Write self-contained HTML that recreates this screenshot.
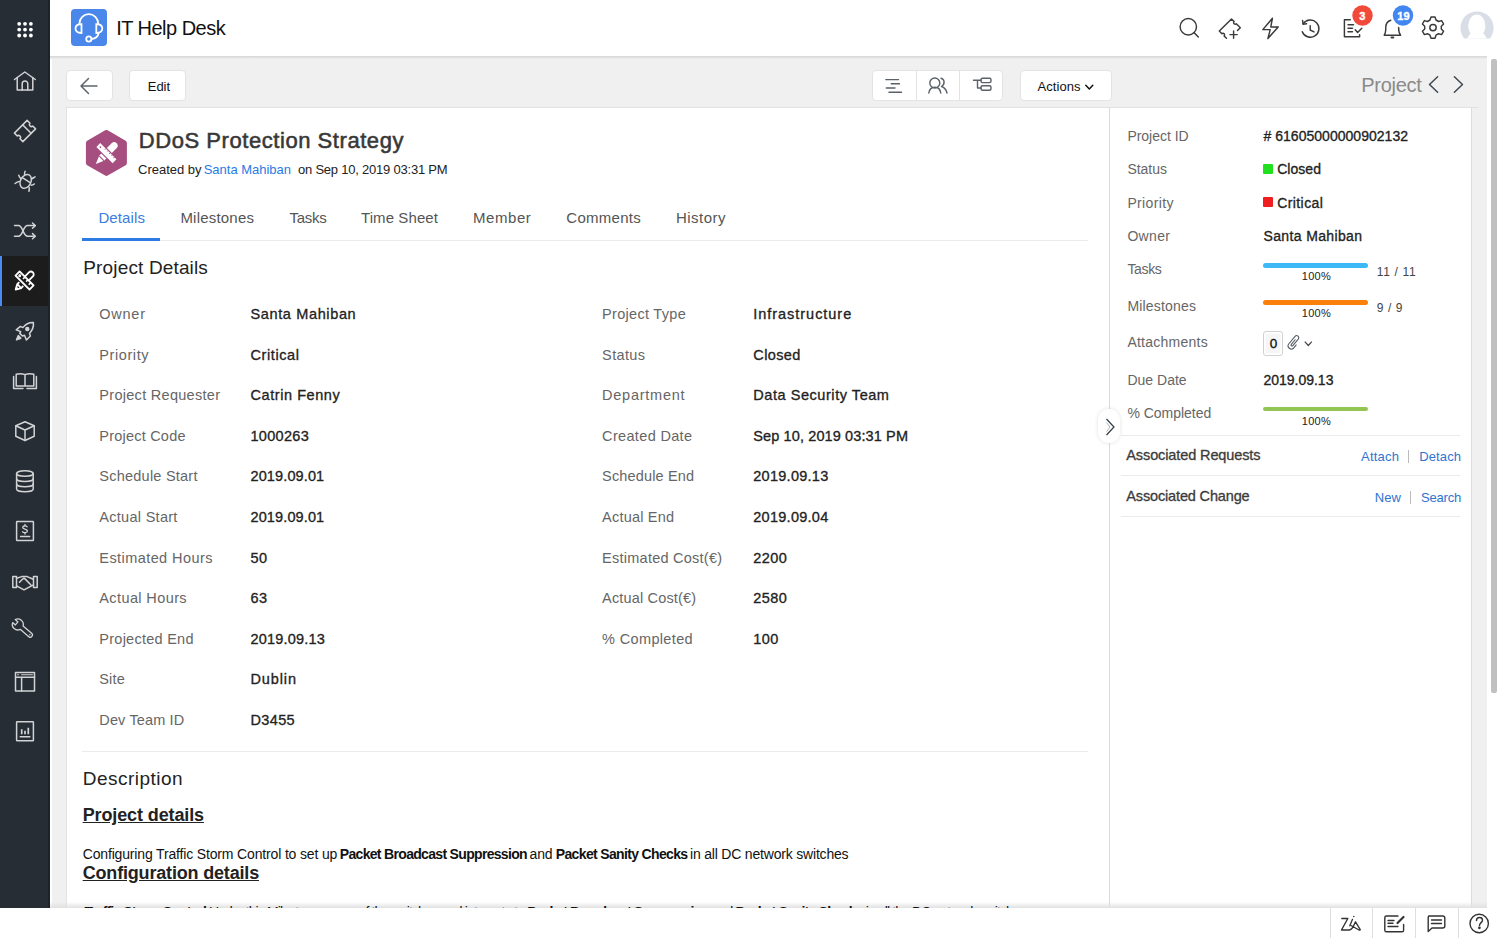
<!DOCTYPE html>
<html><head><meta charset="utf-8"><title>IT Help Desk</title>
<style>
*{margin:0;padding:0;box-sizing:border-box}
html,body{width:1500px;height:938px;overflow:hidden;background:#f0f0f0;font-family:"Liberation Sans",sans-serif;position:relative}
.a{position:absolute}
.t{position:absolute;z-index:4;white-space:nowrap;line-height:1;font-family:"Liberation Sans",sans-serif}
.t b{font-weight:700}
#side{left:0;top:0;width:50px;height:908px;background:#262d35}
#sideedge{left:48px;top:0;width:2px;height:908px;background:#1c232a}
#active{left:0;top:256px;width:48px;height:50px;background:#1c1c1c}
#activebar{left:0;top:256px;width:2px;height:50px;background:#4a8af4}
#header{left:50px;top:0;width:1450px;height:56px;background:#fff}
#hshadow{left:50px;top:56px;width:1437px;height:3px;background:linear-gradient(#d6d6d6,#efefef)}
#whitegap{left:50px;top:56px;width:2px;height:852px;background:#fff}
#track{left:1487px;top:56px;width:13px;height:852px;background:#fff}
#thumb{left:1491px;top:59px;width:6px;height:634px;background:#c1c0c1;border-radius:2px}
.btn{background:#fff;border:1px solid #e3e3e3;border-radius:4px}
#card{left:66px;top:107px;width:1406px;height:820px;background:#fff;border:1px solid #e2e2e2;border-right-color:#dcdcdc}
#divider{left:1109px;top:107px;width:1px;height:810px;background:#dadada}
.hl{height:1px;background:#ebebeb}
#footer{left:0;top:908px;width:1500px;height:30px;background:#fff;z-index:5}
#fshadow{left:50px;top:902px;width:1437px;height:6px;background:linear-gradient(rgba(240,240,240,0),rgba(225,225,225,1))}
.fdiv{top:908px;width:1px;height:30px;background:#dedede;z-index:6}
svg{position:absolute;overflow:visible}

</style></head><body>
<div class="a" id="header"></div>
<div class="a" id="whitegap"></div>
<div class="a" id="track"></div>
<div class="a" id="thumb"></div>
<div class="a" id="hshadow"></div>

<!-- toolbar -->
<div class="a btn" style="left:66px;top:70px;width:47px;height:31px"></div>
<div class="a btn" style="left:129px;top:70px;width:57px;height:31px"></div>
<div class="a btn" style="left:872px;top:70px;width:131px;height:31px"></div>
<div class="a" style="left:916px;top:70px;width:1px;height:31px;background:#e3e3e3"></div>
<div class="a" style="left:959px;top:70px;width:1px;height:31px;background:#e3e3e3"></div>
<div class="a btn" style="left:1020px;top:70px;width:92px;height:31px"></div>

<!-- card -->
<div class="a" id="card"></div>
<div class="a" id="divider"></div>
<div class="a" style="left:1471px;top:107px;width:7px;height:1px;background:#e2e2e2"></div>
<div class="a hl" style="left:82px;top:240px;width:1006px;"></div>
<div class="a" style="left:82px;top:238px;width:78px;height:3px;background:#2f7be5"></div>
<div class="a hl" style="left:82px;top:751px;width:1006px;"></div>
<div class="a hl" style="left:1121px;top:435px;width:339px;"></div>
<div class="a hl" style="left:1121px;top:475px;width:339px;"></div>
<div class="a hl" style="left:1121px;top:516px;width:339px;"></div>

<!-- progress bars -->
<div class="a" style="left:1263px;top:263px;width:105px;height:5px;border-radius:3px;background:#3cb9f6"></div>
<div class="a" style="left:1263px;top:300px;width:105px;height:5px;border-radius:3px;background:#fb7f0b"></div>
<div class="a" style="left:1263px;top:407px;width:105px;height:4px;border-radius:3px;background:#92c552"></div>
<div class="a" style="left:1263px;top:163.5px;width:10px;height:10px;border-radius:1px;background:#20e020"></div>
<div class="a" style="left:1263px;top:197px;width:10px;height:10px;border-radius:1px;background:#f01e1e"></div>
<div class="a" style="left:1263px;top:331px;width:20px;height:25px;border-radius:3px;background:#f6f6f6;border:1.5px solid #d2d2d2;box-shadow:inset 0 0 0 1.5px #fff"></div>
<div class="a" style="left:1408px;top:450px;width:1px;height:13px;background:#bbb"></div>
<div class="a" style="left:1410px;top:491px;width:1px;height:13px;background:#bbb"></div>

<!-- collapse handle -->
<div class="a" style="left:1098px;top:409px;width:22px;height:34px;border-radius:11px;background:#fff;box-shadow:0 0 4px rgba(0,0,0,0.12)"></div>

<!-- footer -->
<div class="a" id="fshadow"></div>
<div class="a" id="footer"></div>
<div class="a" style="left:0;top:908px;width:1500px;height:1px;background:#e6e6e6"></div>
<div class="a fdiv" style="left:1330px"></div>
<div class="a fdiv" style="left:1372px"></div>
<div class="a fdiv" style="left:1415px"></div>
<div class="a fdiv" style="left:1458px"></div>

<!-- sidebar -->
<div class="a" id="side"></div>
<div class="a" id="sideedge"></div>
<div class="a" id="active"></div>
<div class="a" id="activebar"></div>

<!-- logo -->
<div class="a" style="left:71px;top:9px;width:36px;height:37px;border-radius:4px;background:#4a87ea"></div>
<!-- hexagon -->
<svg style="left:0;top:0" width="1500" height="938" viewBox="0 0 1500 938">
  <path d="M106.4 132.5 L124.4 142.9 L124.4 163 L106.4 173.4 L88.4 163 L88.4 142.9 Z" fill="#a64e7f" stroke="#a64e7f" stroke-width="5" stroke-linejoin="round"/>
</svg>
<svg style="left:0;top:0;z-index:3" width="1500" height="938" viewBox="0 0 1500 938">
<!-- sidebar grid -->
<g fill="#fff">
<circle cx="19.2" cy="23.8" r="1.9"/><circle cx="25" cy="23.8" r="1.9"/><circle cx="30.9" cy="23.8" r="1.9"/>
<circle cx="19.2" cy="29.6" r="1.9"/><circle cx="25" cy="29.6" r="1.9"/><circle cx="30.9" cy="29.6" r="1.9"/>
<circle cx="19.2" cy="35.5" r="1.9"/><circle cx="25" cy="35.5" r="1.9"/><circle cx="30.9" cy="35.5" r="1.9"/>
</g>
<g fill="none" stroke="#d2d3d5" stroke-width="1.5" stroke-linejoin="round" stroke-linecap="round">
<!-- home -->
<path d="M14.5 79.5 L24.8 72 L35.3 79.5"/>
<path d="M17.2 77.5 V90 H32.8 V77.5"/>
<path d="M22.2 90 V83.8 A2.8 2.8 0 0 1 27.8 83.8 V90"/>
<!-- ticket -->
<g transform="translate(25 131) rotate(-45)">
<path d="M-9 -6 H9 V-1.9 A1.9 1.9 0 0 0 9 1.9 V6 H-9 V1.9 A1.9 1.9 0 0 0 -9 -1.9 Z"/>
<path d="M2.7 -6 V6"/>
</g>
<!-- bug -->
<ellipse cx="25.7" cy="181.4" rx="5.2" ry="7.3" transform="rotate(28 25.7 181.4)"/>
<path d="M22.3 177.6 L30.2 182.6"/>
<path d="M25.1 171.2 C24.6 172.3 24.4 173.4 24.6 174.6 M18.7 175.3 C19.2 176.6 19.8 177.6 20.9 178.6 M15.1 183.5 C16.5 182.3 17.6 181.6 19.2 181.4 M35 176.9 C33.8 177.6 32.6 178.2 31.5 179.2 M34.3 184 C33.3 184.8 32.3 185.1 31.1 185.2 M28.9 191.2 C29.3 190 29.4 188.8 29.2 187.5"/>
<!-- shuffle -->
<path d="M14.5 225.6 H18.5 C23 225.6 23 236.2 27.5 236.2 H35"/>
<path d="M14.5 236.2 H18.5 C23 236.2 23 225.6 27.5 225.6 H35"/>
<path d="M32.5 223 L35.3 225.6 L32.5 228.2 M32.5 233.6 L35.3 236.2 L32.5 238.8"/>
<!-- rocket -->
<path d="M33.4 322.5 C29.5 322.3 25.5 324.3 22.8 327.6 L20.4 326.4 L16.2 329.8 L20.7 331.6 L19.8 333.4 L22.4 336 L24.5 335.2 L26.4 340 L30.4 336 L29.5 333.4 C32.4 330.3 33.8 326.4 33.4 322.5 Z"/>
<circle cx="27.3" cy="329" r="1.5" fill="#d2d3d5"/>
<path d="M16.5 339.8 L18.3 335.6 L20.8 338.2 Z" fill="#d2d3d5"/>
<!-- book -->
<path d="M16.2 374.2 C19 373.6 22 373.6 25 374.6 C28 373.6 31 373.6 33.8 374.2 V386 H16.2 Z M25 374.6 V386"/>
<path d="M13.6 376.6 V388.4 H23 M36.4 376.6 V388.4 H27"/>
<!-- cube -->
<path d="M25 421.8 L34.2 425.8 V436.2 L25 440.5 L15.8 436.2 V425.8 Z"/>
<path d="M15.8 425.8 L25 430 L34.2 425.8 M25 430 V440.5"/>
<!-- database -->
<ellipse cx="24.9" cy="473.5" rx="8.3" ry="2.8"/>
<path d="M16.6 473.5 V489 A8.3 2.8 0 0 0 33.2 489 V473.5"/>
<path d="M16.6 478.8 A8.3 2.8 0 0 0 33.2 478.8 M16.6 484 A8.3 2.8 0 0 0 33.2 484"/>
<!-- dollar doc -->
<rect x="16.6" y="521.5" width="16.8" height="19" rx="0.5"/>
<path d="M20.6 536.6 H29.6"/>
<path d="M27.2 526.8 C26.5 525.7 22.7 525.5 22.7 527.5 C22.7 529.4 27.4 528.8 27.4 531 C27.4 533 23.3 532.9 22.6 531.8 M25 524.3 V525.8 M25 532.7 V534" stroke-width="1.3"/>
<!-- handshake -->
<path d="M12.8 576.5 H16.5 V587.6 H12.8 Z M33.5 576.5 H37.2 V587.6 H33.5 Z"/>
<path d="M16.5 578.2 L21.8 576.6 H27.2 L33.3 579.2 M16.5 585.8 L24 589.8 L33.5 584.8 M19.5 582.3 L23 578.8 C23.6 578.3 24.4 578.3 25 578.9 L30.8 584.8"/>
<!-- wrench -->
<g transform="translate(17.8 624.4) rotate(40.4)">
<path d="M5.04 -2.2 L16.3 -2.2 A2.2 2.2 0 0 1 16.3 2.2 L5.04 2.2 A5.5 5.5 0 0 1 -5.12 2 L-1.5 2 L-1.5 -2 L-5.12 -2 A5.5 5.5 0 0 1 5.04 -2.2 Z" stroke-width="1.3"/>
<circle cx="15.8" cy="0" r="0.7" fill="#d2d3d5" stroke="none"/>
</g>
<!-- layout -->
<rect x="15.5" y="672.5" width="19" height="18.5"/>
<path d="M15.5 677.2 H34.5 M21.6 677.2 V691"/>
<path d="M17.6 674.8 H18.6 M21.5 674.8 H32.5" stroke-width="1.1"/>
<!-- chart doc -->
<rect x="16.6" y="721.7" width="16.8" height="19" rx="0.5"/>
<path d="M20.2 736.7 H29.8"/>
<path d="M21.7 734.3 V729.2 M25 734.3 V730.8 M28.3 734.3 V727.8" stroke-width="1.7" stroke-linecap="butt"/>
</g>
<!-- active ruler/pencil white -->
<g fill="none" stroke="#fff" stroke-width="1.8" stroke-linejoin="round">
<g transform="translate(24.05 281.25) rotate(45)">
<path d="M-2.8 -3.9 V-9.7 A2.8 2.8 0 0 1 2.8 -9.7 V-3.9 M-2.8 3.9 V6.8 L0 11.8 L2.8 6.8 V3.9 M-2.8 6.8 H2.8"/><path d="M-1.2 9.6 L0 11.8 L1.2 9.6 Z" fill="#fff" stroke-width="1"/>
</g>
<g transform="translate(24.55 280.5) rotate(45)">
<rect x="-9.9" y="-2.9" width="19.8" height="5.8"/>
<path d="M-2.2 -2.9 V0 M1.9 -2.9 V-0.3 M5.9 -2.9 V0" stroke-width="1.5"/>
<circle cx="-6.8" cy="0" r="0.6" fill="#fff"/>
</g>
</g>
<!-- logo headset -->
<g fill="none" stroke="#fff" stroke-width="1.8" stroke-linecap="round">
<path d="M79.5 23.5 A9.3 9.3 0 0 1 98.1 23.5"/>
<path d="M81.5 24.2 V33 C77 33 75.5 30.5 75.5 28.6 C75.5 26.6 77 24.2 81.5 24.2 Z"/>
<path d="M96.3 24.2 V33 C100.8 33 102.3 30.5 102.3 28.6 C102.3 26.6 100.8 24.2 96.3 24.2 Z"/>
<path d="M98.5 33.5 C98 36.5 95.5 38.5 91.5 39"/>
<circle cx="88.8" cy="39" r="2.6"/>
</g>

<!-- hexagon icon (ruler/pencil white) -->
<g transform="translate(106.2 153.7) rotate(45)">
<path d="M-3.5 -11.2 A3.5 3.5 0 0 1 3.5 -11.2 V6.5 L0 14.7 L-3.5 6.5 Z" fill="#fff"/>
<path d="M-3.5 6.5 H3.5" stroke="#a64e7f" stroke-width="1.1"/>
</g>
<g transform="translate(106.4 153.1) rotate(45)">
<rect x="-12.1" y="-3.3" width="24.2" height="6.6" fill="#fff" stroke="#a64e7f" stroke-width="1.2"/>
<path d="M-3.5 -3.3 V-1.3 M-0.5 -3.3 V-1.8 M2.5 -3.3 V-1.3 M5.5 -3.3 V-1.8 M8.5 -3.3 V-1.3" stroke="#a64e7f" stroke-width="0.9"/>
<circle cx="-8.5" cy="0" r="0.8" fill="#a64e7f"/>
</g>
<!-- header icons -->
<g fill="none" stroke="#3a3a3a" stroke-width="1.45" stroke-linejoin="round" stroke-linecap="round">
<circle cx="1188.3" cy="26.8" r="8.2"/>
<path d="M1194.2 32.7 L1198.3 37"/>
<!-- ticket plus -->
<path d="M1237.5 30.5 L1240.3 27.7 L1236.3 23.7 C1234.8 25.2 1232.6 23 1234.1 21.5 L1231.5 18.9 L1219.3 31.1 L1221.9 33.7 C1223.4 32.2 1225.6 34.4 1224.1 35.9 L1226.5 38.3"/>
<path d="M1233.6 31 V38.2 M1230 34.6 H1237.2"/>
<!-- lightning -->
<path d="M1272.4 18.3 L1262.8 29.6 H1270.2 L1267.9 38.6 L1278.2 26.9 H1270.8 Z"/>
<!-- history -->
<g transform="translate(0.8 0.7)">
<path d="M1302.5 23 A8.6 8.6 0 1 1 1301.5 31"/>
<path d="M1301.8 19.8 L1302.2 23.5 L1305.8 23"/>
<path d="M1309.4 25 V29.3 L1313.2 31.2"/>
</g>
<!-- tasks doc -->
<path d="M1350.3 19.8 H1344.4 V36.8 H1359.6 V34.6"/>
<path d="M1348 24.8 H1353.5 M1348 28.2 H1352.5 M1348 31.7 H1352.5"/>
<path d="M1355.2 29.8 L1357.6 32.4 L1361.8 28.2"/>
<!-- bell -->
<path d="M1390.8 20.2 C1387.2 21.2 1385.8 24 1385.8 27.5 C1385.8 31 1385.5 33.5 1384.2 35.2 H1400.6 C1399.2 33.5 1398.6 31 1398.6 27.5"/>
<path d="M1391.5 37.6 H1393.3" stroke-width="2"/>
<!-- gear -->
<path d="M1431 17 H1435 L1436 20 L1438.6 21.5 L1441.6 20.6 L1443.6 24 L1441.3 26.3 V29 L1443.6 31.2 L1441.6 34.6 L1438.6 33.7 L1436 35.2 L1435 38.2 H1431 L1430 35.2 L1427.4 33.7 L1424.4 34.6 L1422.4 31.2 L1424.7 29 V26.3 L1422.4 24 L1424.4 20.6 L1427.4 21.5 L1430 20 Z"/>
<circle cx="1433" cy="27.6" r="3.2"/>
</g>
<!-- badges -->
<circle cx="1362.5" cy="15.5" r="11" fill="#fff"/>
<circle cx="1362.5" cy="15.5" r="10.2" fill="#f24a3a"/>
<circle cx="1403" cy="15.5" r="11" fill="#fff"/>
<circle cx="1403" cy="15.5" r="10.2" fill="#4286f2"/>
<!-- avatar -->
<defs><clipPath id="avc"><rect x="1455" y="5" width="45" height="33.5"/></clipPath></defs>
<g clip-path="url(#avc)">
<circle cx="1477" cy="28" r="16.6" fill="#d8dde6"/>
<ellipse cx="1476.8" cy="26" rx="8.6" ry="11.6" fill="#fff"/>
<path d="M1470 34 L1484 34 L1488 40 L1466 40 Z" fill="#fff"/>
</g>

<!-- toolbar icons -->
<g fill="none" stroke="#5a6169" stroke-width="1.4" stroke-linecap="round" stroke-linejoin="round">
<path d="M1440 78 L1497 78" stroke="none"/>
<!-- back arrow -->
<path d="M97 86 H81.5 M88.5 78.5 L81 86 L88.5 93.5" stroke="#5f666d" stroke-width="1.5"/>
<!-- lines -->
<path d="M885.8 79.6 H898.5 M891.2 83.8 H899.5 M886.3 88 H895 M889 92.2 H901.5"/>
<!-- people -->
<circle cx="934.8" cy="83" r="5"/>
<path d="M928.8 93 C929.5 89 932 87.2 934.8 87.2 C937.6 87.2 940.2 89 940.8 93"/>
<path d="M941 78.2 C944.5 79 945.5 84 941.5 86.5 C944.5 87.5 946.3 90 947 93"/>
<!-- tree -->
<path d="M973.5 80.2 H977.5 V88 H981 M977.5 80.2 H981"/>
<rect x="981" y="78.2" width="10" height="4.4" rx="1.5"/>
<rect x="981" y="85.8" width="10" height="4.4" rx="1.5"/>
<!-- actions chevron -->
<path d="M1085.8 85.2 L1089.3 88.9 L1092.8 85.2" stroke="#111" stroke-width="1.5"/>
<!-- prev next -->
<path d="M1437.6 76.8 L1429.5 84.5 L1437.6 92.3 M1454.4 76.8 L1462.5 84.5 L1454.4 92.3" stroke="#3d4852" stroke-width="1.5"/>
</g>
<!-- collapse handle chevron -->
<path d="M1106.5 419 L1114 427 L1106.5 435" fill="none" stroke="#2f3b46" stroke-width="1.2"/>
<path d="M1106.5 422.5 L1110 427 L1106.5 431.5" fill="none" stroke="#9aa0a6" stroke-width="0.8"/>
<!-- paperclip -->
<g transform="translate(1294.3 342.3) rotate(40)"><path d="M3.2 0.8 V4.6 A3.2 3.2 0 0 1 -3.2 4.6 V-5 A2.1 2.1 0 0 1 1 -5 V3.5 A1 1 0 0 1 -1 3.5 V-2.5" fill="none" stroke="#555c63" stroke-width="1.1" stroke-linecap="round"/></g>
<path d="M1304.8 341.6 L1308.3 345.5 L1311.8 341.6" fill="none" stroke="#444" stroke-width="1.2"/>

</svg>

<svg style="left:0;top:0;z-index:7" width="1500" height="938" viewBox="0 0 1500 938">
<!-- footer icons -->
<g fill="none" stroke="#333" stroke-width="1.4" stroke-linecap="round" stroke-linejoin="round">
<!-- zia -->
<path d="M1341.8 918.5 H1347.8 L1341.5 930 H1349.5 C1351 930 1352.5 928 1353.5 926 L1355.5 921.8 L1360.2 929.5 C1360.5 930 1359.8 930.3 1359 930 L1351 925.5"/>
<path d="M1352.5 919.3 L1349.8 925.8" stroke-width="1.3"/>
<circle cx="1353.8" cy="916.5" r="0.8" fill="#333" stroke="none"/>
<!-- edit note -->
<path d="M1398 916 H1386.5 C1385.5 916 1384.8 916.7 1384.8 917.7 V930.2 C1384.8 931.2 1385.5 931.8 1386.5 931.8 H1402 C1403 931.8 1403.6 931.2 1403.6 930.2 V924.5"/>
<path d="M1388 920.5 H1394 M1388 923.3 H1393 M1388 926.5 H1398"/>
<path d="M1397.5 923 L1403.5 917" stroke-width="2.2"/>
<!-- chat -->
<path d="M1428.8 916 H1442.8 C1443.8 916 1444.8 916.8 1444.8 918 V926 C1444.8 927.2 1443.8 928 1442.8 928 H1432 L1428.2 931.5 V918 C1428.2 916.8 1428.8 916 1428.8 916 Z"/>
<path d="M1431.5 920 H1441.5 M1431.5 923.5 H1441.5"/>
<!-- help -->
<circle cx="1479.2" cy="923.5" r="9.2"/>
<path d="M1476.5 920.5 C1476.5 918.5 1478 917.5 1479.5 917.5 C1481.2 917.5 1482.5 918.7 1482.5 920.2 C1482.5 922.5 1479.5 922.8 1479.5 925.5"/>
<circle cx="1479.4" cy="927.8" r="0.7" fill="#333"/>
</g>
</svg>


<span id="t0" class="t" style="left:116.2px;top:18.47px;font-size:20px;color:#111;font-weight:400;letter-spacing:-0.520px;">IT Help Desk</span>
<span id="t1" class="t" style="left:147.8px;top:79.80px;font-size:13px;color:#111;font-weight:400;letter-spacing:-0.052px;">Edit</span>
<span id="t2" class="t" style="left:1037.5px;top:79.70px;font-size:13px;color:#111;font-weight:400;letter-spacing:0.079px;">Actions</span>
<span id="t3" class="t" style="left:1361.3px;top:74.97px;font-size:20px;color:#8a8a8a;font-weight:400;letter-spacing:-0.278px;">Project</span>
<span id="t4" class="t" style="left:138.8px;top:130.38px;font-size:22px;color:#383838;font-weight:400;letter-spacing:0.554px;-webkit-text-stroke:0.55px #383838;">DDoS Protection Strategy</span>
<span id="t5" class="t" style="left:138px;top:163.00px;font-size:13px;color:#222;font-weight:400;letter-spacing:-0.011px;">Created by</span>
<span id="t6" class="t" style="left:203.7px;top:163.00px;font-size:13px;color:#2a7be6;font-weight:400;letter-spacing:-0.012px;">Santa Mahiban</span>
<span id="t7" class="t" style="left:298px;top:163.00px;font-size:13px;color:#222;font-weight:400;letter-spacing:-0.221px;">on Sep 10, 2019 03:31 PM</span>
<span id="t8" class="t" style="left:98.4px;top:210.30px;font-size:15px;color:#3b7ddd;font-weight:400;letter-spacing:0.107px;">Details</span>
<span id="t9" class="t" style="left:180.4px;top:210.30px;font-size:15px;color:#555;font-weight:400;letter-spacing:0.210px;">Milestones</span>
<span id="t10" class="t" style="left:289.6px;top:210.30px;font-size:15px;color:#555;font-weight:400;letter-spacing:-0.311px;">Tasks</span>
<span id="t11" class="t" style="left:361px;top:210.30px;font-size:15px;color:#555;font-weight:400;letter-spacing:0.086px;">Time Sheet</span>
<span id="t12" class="t" style="left:473px;top:210.30px;font-size:15px;color:#555;font-weight:400;letter-spacing:0.563px;">Member</span>
<span id="t13" class="t" style="left:566.3px;top:210.30px;font-size:15px;color:#555;font-weight:400;letter-spacing:0.273px;">Comments</span>
<span id="t14" class="t" style="left:676px;top:210.30px;font-size:15px;color:#555;font-weight:400;letter-spacing:0.475px;">History</span>
<span id="t15" class="t" style="left:83.3px;top:257.82px;font-size:19px;color:#222;font-weight:400;letter-spacing:0.146px;">Project Details</span>
<span id="t16" class="t" style="left:99.3px;top:307.03px;font-size:14.5px;color:#666;font-weight:400;letter-spacing:0.738px;">Owner</span>
<span id="t17" class="t" style="left:250.5px;top:307.03px;font-size:14.5px;color:#222;font-weight:400;letter-spacing:0.634px;-webkit-text-stroke:0.32px #222;">Santa Mahiban</span>
<span id="t18" class="t" style="left:99.3px;top:347.63px;font-size:14.5px;color:#666;font-weight:400;letter-spacing:0.585px;">Priority</span>
<span id="t19" class="t" style="left:250.5px;top:347.63px;font-size:14.5px;color:#222;font-weight:400;letter-spacing:0.586px;-webkit-text-stroke:0.32px #222;">Critical</span>
<span id="t20" class="t" style="left:99.3px;top:388.23px;font-size:14.5px;color:#666;font-weight:400;letter-spacing:0.290px;">Project Requester</span>
<span id="t21" class="t" style="left:250.5px;top:388.23px;font-size:14.5px;color:#222;font-weight:400;letter-spacing:0.566px;-webkit-text-stroke:0.32px #222;">Catrin Fenny</span>
<span id="t22" class="t" style="left:99.3px;top:428.83px;font-size:14.5px;color:#666;font-weight:400;letter-spacing:0.215px;">Project Code</span>
<span id="t23" class="t" style="left:250.5px;top:428.83px;font-size:14.5px;color:#222;font-weight:400;letter-spacing:0.305px;-webkit-text-stroke:0.32px #222;">1000263</span>
<span id="t24" class="t" style="left:99.3px;top:469.43px;font-size:14.5px;color:#666;font-weight:400;letter-spacing:0.235px;">Schedule Start</span>
<span id="t25" class="t" style="left:250.5px;top:469.43px;font-size:14.5px;color:#222;font-weight:400;letter-spacing:0.123px;-webkit-text-stroke:0.32px #222;">2019.09.01</span>
<span id="t26" class="t" style="left:99.3px;top:510.03px;font-size:14.5px;color:#666;font-weight:400;letter-spacing:0.287px;">Actual Start</span>
<span id="t27" class="t" style="left:250.5px;top:510.03px;font-size:14.5px;color:#222;font-weight:400;letter-spacing:0.123px;-webkit-text-stroke:0.32px #222;">2019.09.01</span>
<span id="t28" class="t" style="left:99.3px;top:550.63px;font-size:14.5px;color:#666;font-weight:400;letter-spacing:0.427px;">Estimated Hours</span>
<span id="t29" class="t" style="left:250.5px;top:550.63px;font-size:14.5px;color:#222;font-weight:400;letter-spacing:0.430px;-webkit-text-stroke:0.32px #222;">50</span>
<span id="t30" class="t" style="left:99.3px;top:591.23px;font-size:14.5px;color:#666;font-weight:400;letter-spacing:0.391px;">Actual Hours</span>
<span id="t31" class="t" style="left:250.5px;top:591.23px;font-size:14.5px;color:#222;font-weight:400;letter-spacing:0.430px;-webkit-text-stroke:0.32px #222;">63</span>
<span id="t32" class="t" style="left:99.3px;top:631.83px;font-size:14.5px;color:#666;font-weight:400;letter-spacing:0.255px;">Projected End</span>
<span id="t33" class="t" style="left:250.5px;top:631.83px;font-size:14.5px;color:#222;font-weight:400;letter-spacing:0.203px;-webkit-text-stroke:0.32px #222;">2019.09.13</span>
<span id="t34" class="t" style="left:99.3px;top:672.43px;font-size:14.5px;color:#666;font-weight:400;letter-spacing:0.152px;">Site</span>
<span id="t35" class="t" style="left:250.5px;top:672.43px;font-size:14.5px;color:#222;font-weight:400;letter-spacing:0.881px;-webkit-text-stroke:0.32px #222;">Dublin</span>
<span id="t36" class="t" style="left:99.3px;top:713.03px;font-size:14.5px;color:#666;font-weight:400;letter-spacing:0.132px;">Dev Team ID</span>
<span id="t37" class="t" style="left:250.5px;top:713.03px;font-size:14.5px;color:#222;font-weight:400;letter-spacing:0.353px;-webkit-text-stroke:0.32px #222;">D3455</span>
<span id="t38" class="t" style="left:602.1px;top:307.03px;font-size:14.5px;color:#666;font-weight:400;letter-spacing:0.297px;">Project Type</span>
<span id="t39" class="t" style="left:753.3px;top:307.03px;font-size:14.5px;color:#222;font-weight:400;letter-spacing:0.962px;-webkit-text-stroke:0.32px #222;">Infrastructure</span>
<span id="t40" class="t" style="left:602.1px;top:347.63px;font-size:14.5px;color:#666;font-weight:400;letter-spacing:0.366px;">Status</span>
<span id="t41" class="t" style="left:753.3px;top:347.63px;font-size:14.5px;color:#222;font-weight:400;letter-spacing:0.360px;-webkit-text-stroke:0.32px #222;">Closed</span>
<span id="t42" class="t" style="left:602.1px;top:388.23px;font-size:14.5px;color:#666;font-weight:400;letter-spacing:0.745px;">Department</span>
<span id="t43" class="t" style="left:753.3px;top:388.23px;font-size:14.5px;color:#222;font-weight:400;letter-spacing:0.552px;-webkit-text-stroke:0.32px #222;">Data Security Team</span>
<span id="t44" class="t" style="left:602.1px;top:428.83px;font-size:14.5px;color:#666;font-weight:400;letter-spacing:0.338px;">Created Date</span>
<span id="t45" class="t" style="left:753.3px;top:428.83px;font-size:14.5px;color:#222;font-weight:400;letter-spacing:0.116px;-webkit-text-stroke:0.32px #222;">Sep 10, 2019 03:31 PM</span>
<span id="t46" class="t" style="left:602.1px;top:469.43px;font-size:14.5px;color:#666;font-weight:400;letter-spacing:0.158px;">Schedule End</span>
<span id="t47" class="t" style="left:753.3px;top:469.43px;font-size:14.5px;color:#222;font-weight:400;letter-spacing:0.262px;-webkit-text-stroke:0.32px #222;">2019.09.13</span>
<span id="t48" class="t" style="left:602.1px;top:510.03px;font-size:14.5px;color:#666;font-weight:400;letter-spacing:0.206px;">Actual End</span>
<span id="t49" class="t" style="left:753.3px;top:510.03px;font-size:14.5px;color:#222;font-weight:400;letter-spacing:0.262px;-webkit-text-stroke:0.32px #222;">2019.09.04</span>
<span id="t50" class="t" style="left:602.1px;top:550.63px;font-size:14.5px;color:#666;font-weight:400;letter-spacing:0.245px;">Estimated Cost(&euro;)</span>
<span id="t51" class="t" style="left:753.3px;top:550.63px;font-size:14.5px;color:#222;font-weight:400;letter-spacing:0.384px;-webkit-text-stroke:0.32px #222;">2200</span>
<span id="t52" class="t" style="left:602.1px;top:591.23px;font-size:14.5px;color:#666;font-weight:400;letter-spacing:0.159px;">Actual Cost(&euro;)</span>
<span id="t53" class="t" style="left:753.3px;top:591.23px;font-size:14.5px;color:#222;font-weight:400;letter-spacing:0.384px;-webkit-text-stroke:0.32px #222;">2580</span>
<span id="t54" class="t" style="left:602.1px;top:631.83px;font-size:14.5px;color:#666;font-weight:400;letter-spacing:0.350px;">% Completed</span>
<span id="t55" class="t" style="left:753.3px;top:631.83px;font-size:14.5px;color:#222;font-weight:400;letter-spacing:0.468px;-webkit-text-stroke:0.32px #222;">100</span>
<span id="t56" class="t" style="left:82.7px;top:769.02px;font-size:19px;color:#222;font-weight:400;letter-spacing:0.478px;">Description</span>
<span id="t57" class="t" style="left:82.7px;top:805.76px;font-size:18px;color:#222;font-weight:700;letter-spacing:-0.117px;text-decoration:underline;">Project details</span>
<span id="t58" class="t" style="left:82.7px;top:847.15px;font-size:14px;color:#111;font-weight:400;letter-spacing:-0.156px;">Configuring Traffic Storm Control to set up</span>
<span id="t59" class="t" style="left:339.8px;top:847.15px;font-size:14px;color:#111;font-weight:700;letter-spacing:-0.681px;">Packet Broadcast Suppression</span>
<span id="t60" class="t" style="left:529.5px;top:847.15px;font-size:14px;color:#111;font-weight:400;letter-spacing:-0.120px;">and</span>
<span id="t61" class="t" style="left:555.8px;top:847.15px;font-size:14px;color:#111;font-weight:700;letter-spacing:-0.653px;">Packet Sanity Checks</span>
<span id="t62" class="t" style="left:690px;top:847.15px;font-size:14px;color:#111;font-weight:400;letter-spacing:-0.192px;">in all DC network switches</span>
<span id="t63" class="t" style="left:82.7px;top:864.06px;font-size:18px;color:#222;font-weight:700;letter-spacing:-0.177px;text-decoration:underline;">Configuration details</span>
<span id="t64" class="t" style="left:84.4px;top:904.95px;font-size:14px;color:#111;font-weight:400;letter-spacing:-0.881px;"><b>Traffic Storm Control</b> Under this Milestone, some of the switches and integrate to <b>Packet Broadcast Suppression</b> and <b>Packet Sanity Checks</b> in all the DC network switches</span>
<span id="t65" class="t" style="left:1127.4px;top:129.15px;font-size:14px;color:#666;font-weight:400;letter-spacing:-0.027px;">Project ID</span>
<span id="t66" class="t" style="left:1127.4px;top:162.45px;font-size:14px;color:#666;font-weight:400;letter-spacing:-0.016px;">Status</span>
<span id="t67" class="t" style="left:1127.4px;top:196.15px;font-size:14px;color:#666;font-weight:400;letter-spacing:0.354px;">Priority</span>
<span id="t68" class="t" style="left:1127.4px;top:228.85px;font-size:14px;color:#666;font-weight:400;letter-spacing:0.332px;">Owner</span>
<span id="t69" class="t" style="left:1127.4px;top:262.45px;font-size:14px;color:#666;font-weight:400;letter-spacing:-0.338px;">Tasks</span>
<span id="t70" class="t" style="left:1127.4px;top:299.15px;font-size:14px;color:#666;font-weight:400;letter-spacing:0.188px;">Milestones</span>
<span id="t71" class="t" style="left:1127.4px;top:335.45px;font-size:14px;color:#666;font-weight:400;letter-spacing:0.253px;">Attachments</span>
<span id="t72" class="t" style="left:1127.4px;top:373.15px;font-size:14px;color:#666;font-weight:400;letter-spacing:0.018px;">Due Date</span>
<span id="t73" class="t" style="left:1127.4px;top:405.95px;font-size:14px;color:#666;font-weight:400;letter-spacing:-0.014px;">% Completed</span>
<span id="t74" class="t" style="left:1263.5px;top:129.15px;font-size:14px;color:#222;font-weight:400;letter-spacing:0.024px;-webkit-text-stroke:0.32px #222;"># 61605000000902132</span>
<span id="t75" class="t" style="left:1277.2px;top:162.45px;font-size:14px;color:#222;font-weight:400;letter-spacing:0.035px;-webkit-text-stroke:0.32px #222;">Closed</span>
<span id="t76" class="t" style="left:1277.2px;top:196.15px;font-size:14px;color:#222;font-weight:400;letter-spacing:0.414px;-webkit-text-stroke:0.32px #222;">Critical</span>
<span id="t77" class="t" style="left:1263.5px;top:228.85px;font-size:14px;color:#222;font-weight:400;letter-spacing:0.362px;-webkit-text-stroke:0.32px #222;">Santa Mahiban</span>
<span id="t78" class="t" style="left:1301.8px;top:271.49px;font-size:11px;color:#222;font-weight:400;letter-spacing:0.264px;">100%</span>
<span id="t79" class="t" style="left:1376.8px;top:265.84px;font-size:12px;color:#444;font-weight:400;letter-spacing:0.654px;">11 / 11</span>
<span id="t80" class="t" style="left:1301.8px;top:308.39px;font-size:11px;color:#222;font-weight:400;letter-spacing:0.264px;">100%</span>
<span id="t81" class="t" style="left:1376.8px;top:302.44px;font-size:12px;color:#444;font-weight:400;letter-spacing:0.568px;">9 / 9</span>
<span id="t82" class="t" style="left:1269.8px;top:337.37px;font-size:13.5px;color:#111;font-weight:400;letter-spacing:0.000px;-webkit-text-stroke:0.32px #111;">0</span>
<span id="t83" class="t" style="left:1263.5px;top:373.15px;font-size:14px;color:#222;font-weight:400;letter-spacing:-0.017px;-webkit-text-stroke:0.32px #222;">2019.09.13</span>
<span id="t84" class="t" style="left:1301.8px;top:415.69px;font-size:11px;color:#222;font-weight:400;letter-spacing:0.264px;">100%</span>
<span id="t85" class="t" style="left:1126.3px;top:448.43px;font-size:14.5px;color:#3c3c3c;font-weight:400;letter-spacing:-0.111px;-webkit-text-stroke:0.32px #3c3c3c;">Associated Requests</span>
<span id="t86" class="t" style="left:1361px;top:449.70px;font-size:13px;color:#2f74d0;font-weight:400;letter-spacing:0.223px;">Attach</span>
<span id="t87" class="t" style="left:1419.2px;top:449.70px;font-size:13px;color:#2f74d0;font-weight:400;letter-spacing:0.133px;">Detach</span>
<span id="t88" class="t" style="left:1126.3px;top:489.43px;font-size:14.5px;color:#3c3c3c;font-weight:400;letter-spacing:-0.150px;-webkit-text-stroke:0.32px #3c3c3c;">Associated Change</span>
<span id="t89" class="t" style="left:1374.7px;top:490.70px;font-size:13px;color:#2f74d0;font-weight:400;letter-spacing:0.096px;">New</span>
<span id="t90" class="t" style="left:1421.1px;top:490.70px;font-size:13px;color:#2f74d0;font-weight:400;letter-spacing:-0.216px;">Search</span>
<span id="t91" class="t" style="left:1359.3px;top:10.69px;font-size:11px;color:#fff;font-weight:700;letter-spacing:0.000px;-webkit-text-stroke:0.4px #fff;">3</span>
<span id="t92" class="t" style="left:1397.3px;top:10.69px;font-size:11px;color:#fff;font-weight:700;letter-spacing:0.000px;-webkit-text-stroke:0.4px #fff;">19</span>
</body></html>
